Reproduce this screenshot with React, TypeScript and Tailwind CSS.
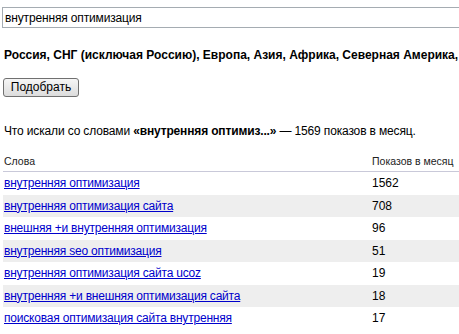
import React from 'react';

const rows: { phrase: string; count: number }[] = [
  { phrase: 'внутренняя оптимизация', count: 1562 },
  { phrase: 'внутренняя оптимизация сайта', count: 708 },
  { phrase: 'внешняя +и внутренняя оптимизация', count: 96 },
  { phrase: 'внутренняя seo оптимизация', count: 51 },
  { phrase: 'внутренняя оптимизация сайта ucoz', count: 19 },
  { phrase: 'внутренняя +и внешняя оптимизация сайта', count: 18 },
  { phrase: 'поисковая оптимизация сайта внутренняя', count: 17 },
];

export default function App() {
  return (
    <div className="w-[459px] h-[334px] overflow-hidden bg-white text-black font-['Liberation_Sans',Arial,sans-serif]">
      <div className="pt-[7px] pl-[2px]">
        <input
          type="text"
          defaultValue="внутренняя оптимизация"
          className="block w-[480px] h-[21px] border border-[#a5acb2] px-[2px] text-[12px] tracking-[-0.15px] outline-none"
        />
      </div>

      <p className="mt-[18px] pl-[4px] text-[12px] font-bold whitespace-nowrap">
        Россия, СНГ (исключая Россию), Европа, Азия, Африка, Северная Америка, Южная Америка
      </p>

      <div className="mt-[10px] pl-[3px]">
        <button className="h-[19px] w-[76px] rounded-[3px] border border-[#707070] bg-gradient-to-b from-[#f6f6f6] to-[#dcdcdc] text-[12px] leading-none">
          Подобрать
        </button>
      </div>

      <p className="mt-[24px] pl-[4px] text-[12px] tracking-[-0.15px] whitespace-nowrap">
        Что искали со словами <b>«внутренняя оптимиз...»</b> — 1569 показов в месяц.
      </p>

      <div className="mt-[12px] ml-[3px]">
        <div className="flex h-[20px] items-center border-b border-[#c9c9d9] text-[10.5px] text-[#222]">
          <div className="w-[369px] pl-[1px]">Слова</div>
          <div>Показов в месяц</div>
        </div>
        {rows.map((r, i) => (
          <div
            key={r.phrase}
            className={`flex h-[22.5px] items-center text-[12px] ${i % 2 === 1 ? 'bg-[#eeeeee]' : ''}`}
          >
            <div className="w-[369px] pl-[1px]">
              <a href="#" className="text-[#0000cc] underline tracking-[-0.2px]">
                {r.phrase}
              </a>
            </div>
            <div>{r.count}</div>
          </div>
        ))}
      </div>
    </div>
  );
}
